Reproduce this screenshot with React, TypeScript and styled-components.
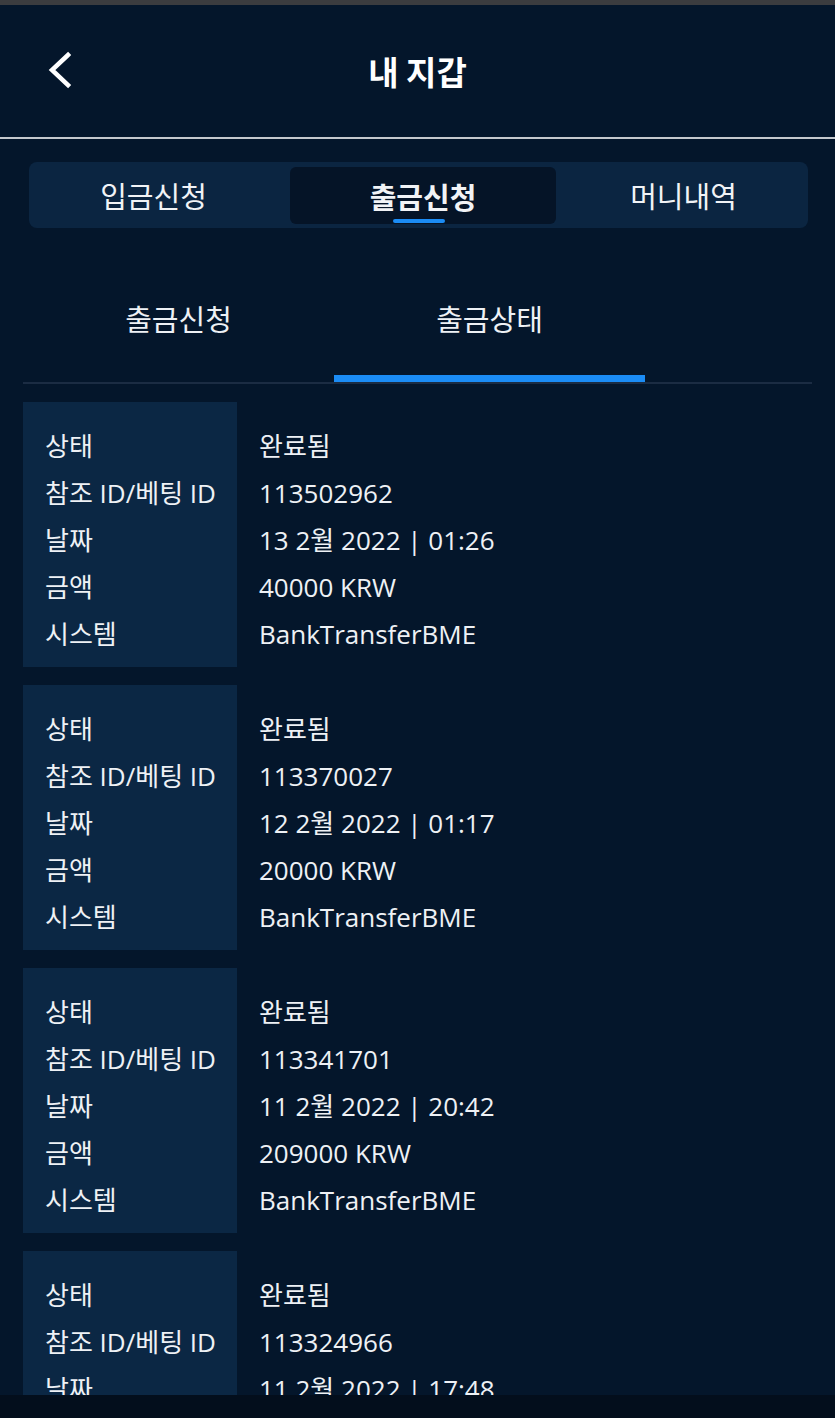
import styled, { createGlobalStyle } from "styled-components";

type Row = { label: string; value: string };

const records: Row[][] = [
  [
    { label: "상태", value: "완료됨" },
    { label: "참조 ID/베팅 ID", value: "113502962" },
    { label: "날짜", value: "13 2월 2022 | 01:26" },
    { label: "금액", value: "40000 KRW" },
    { label: "시스템", value: "BankTransferBME" },
  ],
  [
    { label: "상태", value: "완료됨" },
    { label: "참조 ID/베팅 ID", value: "113370027" },
    { label: "날짜", value: "12 2월 2022 | 01:17" },
    { label: "금액", value: "20000 KRW" },
    { label: "시스템", value: "BankTransferBME" },
  ],
  [
    { label: "상태", value: "완료됨" },
    { label: "참조 ID/베팅 ID", value: "113341701" },
    { label: "날짜", value: "11 2월 2022 | 20:42" },
    { label: "금액", value: "209000 KRW" },
    { label: "시스템", value: "BankTransferBME" },
  ],
  [
    { label: "상태", value: "완료됨" },
    { label: "참조 ID/베팅 ID", value: "113324966" },
    { label: "날짜", value: "11 2월 2022 | 17:48" },
    { label: "금액", value: "20000 KRW" },
    { label: "시스템", value: "BankTransferBME" },
  ],
];

const App = () => {
  return (
    <>
      <GlobalStyle />
      <Page>
        <TopStrip />
        <Header>
          <BackButton>
            <svg width="30" height="40" viewBox="0 0 30 40">
              <polyline
                points="22,4 6,19 22,34"
                fill="none"
                stroke="#ffffff"
                strokeWidth="4.5"
                strokeLinecap="square"
                strokeLinejoin="miter"
              />
            </svg>
          </BackButton>
          <HeaderTitle>내 지갑</HeaderTitle>
        </Header>
        <Divider />
        <TabBar>
          <Tab>입금신청</Tab>
          <Tab $active>
            출금신청
            <TabIndicator />
          </Tab>
          <Tab>머니내역</Tab>
        </TabBar>
        <SubTabs>
          <SubTab>출금신청</SubTab>
          <SubTab $active>출금상태</SubTab>
        </SubTabs>
        <List>
          {records.map((rows, i) => (
            <Card key={i}>
              <LabelCol>
                {rows.map((r) => (
                  <Cell key={r.label}>{r.label}</Cell>
                ))}
              </LabelCol>
              <ValueCol>
                {rows.map((r) => (
                  <Cell key={r.label}>{r.value}</Cell>
                ))}
              </ValueCol>
            </Card>
          ))}
        </List>
        <BottomBar />
      </Page>
    </>
  );
};

export default App;

const GlobalStyle = createGlobalStyle`
  * {
    box-sizing: border-box;
  }
  body {
    margin: 0;
    background-color: #04162b;
    font-family: "Open Sans", "Noto Sans CJK KR", sans-serif;
    color: #eef1f5;
  }
`;

const Page = styled.div`
  width: 835px;
  height: 1418px;
  display: flex;
  flex-direction: column;
  background-color: #04162b;
  overflow: hidden;
`;

const TopStrip = styled.div`
  height: 5px;
  flex-shrink: 0;
  background-color: #3b3c3f;
`;

const Header = styled.div`
  height: 132px;
  flex-shrink: 0;
  display: flex;
  align-items: center;
  justify-content: center;
  position: relative;
`;

const BackButton = styled.div`
  position: absolute;
  left: 46px;
  top: 46px;
  width: 30px;
  height: 40px;
`;

const HeaderTitle = styled.h1`
  margin: 0;
  font-family: "Noto Sans CJK KR", sans-serif;
  font-size: 33px;
  font-weight: 700;
  color: #ffffff;
`;

const Divider = styled.div`
  height: 2px;
  flex-shrink: 0;
  background-color: #c4c8cd;
`;

const TabBar = styled.div`
  margin: 23px 27px 0 29px;
  height: 66px;
  flex-shrink: 0;
  display: grid;
  grid-template-columns: repeat(3, 265px);
  justify-content: center;
  background-color: #0b2541;
  border-radius: 8px;
`;

const Tab = styled.div<{ $active?: boolean }>`
  position: relative;
  display: flex;
  align-items: center;
  justify-content: center;
  font-family: "Noto Sans CJK KR", sans-serif;
  font-size: 29px;
  font-weight: ${(p) => (p.$active ? 700 : 400)};
  color: #f1f3f6;
  margin: ${(p) => (p.$active ? "5px -5px 4px 4px" : "0")};
  background-color: ${(p) => (p.$active ? "#051427" : "transparent")};
  border-radius: 6px;
`;

const TabIndicator = styled.span`
  position: absolute;
  bottom: 1px;
  left: 50%;
  margin-left: -30px;
  width: 52px;
  height: 4px;
  border-radius: 2px;
  background-color: #1b8cf5;
`;

const SubTabs = styled.div`
  margin: 0 23px;
  flex-shrink: 0;
  display: flex;
  border-bottom: 2px solid #1b2c43;
`;

const SubTab = styled.div<{ $active?: boolean }>`
  width: 311px;
  padding: 72px 0 39px;
  line-height: 36px;
  text-align: center;
  font-family: "Noto Sans CJK KR", sans-serif;
  font-size: 29px;
  color: #eef1f5;
  border-bottom: 7px solid ${(p) => (p.$active ? "#1b8cf5" : "transparent")};
`;

const List = styled.div`
  flex: 1;
  overflow: hidden;
  padding: 18px 23px 0;
  display: flex;
  flex-direction: column;
  gap: 18px;
`;

const Card = styled.div`
  flex-shrink: 0;
  height: 265px;
  display: grid;
  grid-template-columns: 214px 1fr;
`;

const LabelCol = styled.div`
  background-color: #0b2744;
  padding: 21px 0 9px 22px;
`;

const ValueCol = styled.div`
  padding: 21px 0 9px 22px;
`;

const Cell = styled.div`
  height: 47px;
  line-height: 47px;
  font-size: 26px;
  color: #eef1f5;
  white-space: nowrap;
`;

const BottomBar = styled.div`
  height: 23px;
  flex-shrink: 0;
  background-color: #030e1c;
`;
